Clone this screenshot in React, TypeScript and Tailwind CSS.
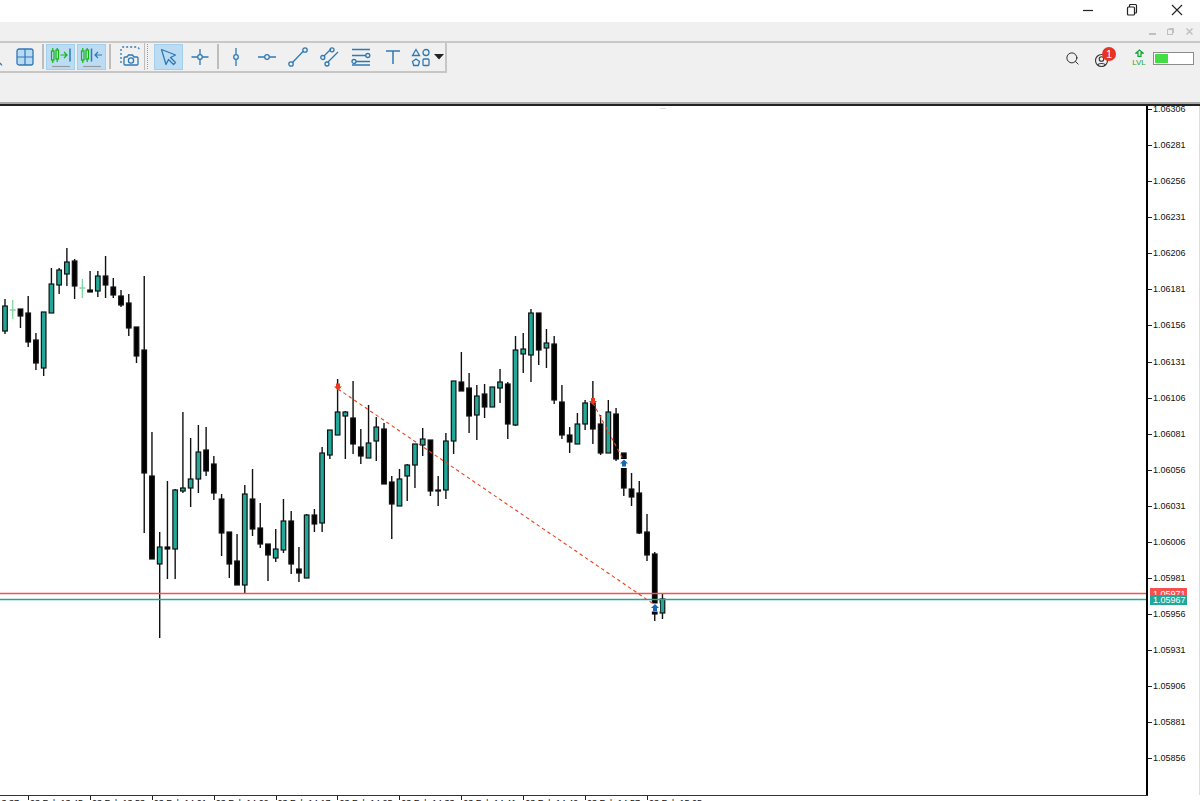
import React from "react";
import { Search } from "lucide-react";

type Candle = [number, number, number, number, "u" | "d" | "g"];

// high, low, body top, body bottom, kind
const candles: Candle[] = [
  [298, 333, 305, 330, "u"], [299, 318, 309, 309, "g"], [308, 327, 308, 315, "d"], [295, 346, 312, 341, "d"],
  [332, 369, 339, 362, "d"], [311, 375, 311, 367, "u"], [267, 312, 283, 312, "u"], [267, 293, 269, 284, "u"],
  [247, 285, 261, 273, "u"], [258, 298, 260, 285, "d"], [278, 297, 287, 287, "g"], [270, 291, 289, 291, "d"],
  [270, 296, 275, 290, "u"], [255, 297, 275, 284, "d"], [277, 297, 286, 294, "d"], [289, 306, 295, 304, "d"],
  [293, 335, 302, 327, "d"], [326, 362, 326, 355, "d"], [275, 532, 349, 472, "d"], [431, 558, 475, 558, "d"],
  [531, 637, 546, 563, "u"], [480, 578, 546, 548, "d"], [488, 578, 489, 548, "u"], [411, 492, 487, 490, "u"],
  [437, 506, 478, 487, "u"], [424, 492, 451, 478, "u"], [426, 475, 449, 470, "d"], [455, 499, 463, 492, "d"],
  [493, 555, 498, 532, "d"], [531, 577, 531, 563, "d"], [533, 584, 560, 584, "d"], [484, 592, 493, 584, "u"],
  [468, 535, 498, 528, "d"], [502, 547, 527, 543, "d"], [543, 580, 543, 554, "d"], [528, 561, 548, 557, "u"],
  [498, 552, 520, 549, "u"], [510, 573, 520, 563, "d"], [546, 581, 568, 572, "d"], [513, 577, 514, 577, "u"],
  [508, 531, 514, 523, "d"], [446, 531, 452, 522, "u"], [429, 458, 429, 454, "u"], [378, 434, 411, 434, "u"],
  [410, 458, 411, 415, "u"], [380, 453, 417, 443, "d"], [428, 463, 446, 455, "d"], [404, 457, 442, 457, "u"],
  [416, 460, 426, 440, "u"], [422, 483, 428, 483, "d"], [475, 538, 481, 503, "d"], [468, 505, 478, 505, "u"],
  [463, 500, 464, 475, "u"], [443, 487, 443, 464, "u"], [427, 455, 438, 444, "u"], [439, 495, 439, 490, "d"],
  [475, 505, 489, 490, "d"], [432, 498, 440, 489, "u"], [380, 453, 380, 440, "u"], [351, 390, 381, 390, "d"],
  [372, 432, 387, 415, "d"], [384, 439, 395, 414, "u"], [383, 417, 393, 406, "d"], [386, 406, 386, 406, "u"],
  [368, 402, 381, 387, "u"], [381, 438, 383, 423, "d"], [335, 425, 349, 424, "u"], [332, 372, 348, 353, "u"],
  [308, 381, 312, 354, "u"], [312, 364, 312, 349, "d"], [328, 367, 342, 347, "u"], [335, 403, 343, 399, "d"],
  [384, 438, 401, 434, "d"], [426, 452, 434, 441, "d"], [412, 443, 423, 443, "u"], [399, 429, 402, 423, "u"],
  [380, 443, 402, 428, "d"], [414, 454, 423, 452, "d"], [399, 452, 411, 452, "u"], [407, 460, 413, 458, "d"],
  [452, 495, 452, 487, "d"], [472, 505, 488, 496, "d"], [480, 533, 492, 532, "d"], [513, 560, 531, 554, "d"],
  [551, 620, 553, 613, "d"], [592, 618, 598, 612, "u"],
];

const prices = [
  "1.06306", "1.06281", "1.06256", "1.06231", "1.06206", "1.06181", "1.06156", "1.06131", "1.06106", "1.06081",
  "1.06056", "1.06031", "1.06006", "1.05981", "1.05956", "1.05931", "1.05906", "1.05881", "1.05856",
];

const times = ["13:45", "13:53", "14:01", "14:09", "14:17", "14:25", "14:33", "14:41", "14:49", "14:57", "15:05"];

const BLUE = "#2f78b4";

function Sep() {
  return <div className="w-[2px] h-[25px] bg-[#bdbdbd] shrink-0" />;
}

function Gap({ w }: { w: string }) {
  return <div className={`${w} shrink-0`} />;
}

function Icon({ children }: { children: React.ReactNode }) {
  return (
    <svg width="20" height="20" viewBox="0 0 20 20" fill="none" stroke={BLUE} strokeWidth="1.3">
      {children}
    </svg>
  );
}

function ActiveButton({ children }: { children: React.ReactNode }) {
  return (
    <div className="w-[29px] h-[26px] shrink-0 flex items-center justify-center bg-[#bcdcf4] border border-[#a3cfef]">
      {children}
    </div>
  );
}

function Cell({ w, children }: { w: string; children: React.ReactNode }) {
  return <div className={`${w} h-[26px] shrink-0 flex items-center justify-center`}>{children}</div>;
}

function CandlesIcon({ dir }: { dir: "in" | "out" }) {
  return (
    <svg width="24" height="22" viewBox="0 0 24 22" fill="none">
      <g stroke="#12b312" strokeWidth="1.2">
        <rect x={dir === "in" ? 2.5 : 1.5} y="5" width="2.5" height="9" />
        <path d={dir === "in" ? "M3.8 2v3M3.8 14v3" : "M2.8 2v3M2.8 14v3"} />
        <rect x={dir === "in" ? 7 : 6} y="4" width="2.5" height="9" />
        <path d={dir === "in" ? "M8.2 2v2M8.2 13v3" : "M7.2 2v2M7.2 13v3"} />
      </g>
      {dir === "in" ? (
        <>
          <path d="M11.5 9h6M15 6l3 3-3 3" stroke="#12b312" strokeWidth="1.2" />
          <path d="M21 2.5v13" stroke={BLUE} strokeWidth="1.5" />
        </>
      ) : (
        <>
          <path d="M11.5 2.5v13" stroke={BLUE} strokeWidth="1.5" />
          <path d="M22 9h-7M18 6l-3 3 3 3" stroke={BLUE} strokeWidth="1.2" />
        </>
      )}
      <path d="M3 20.5h18" stroke="#9a9a9a" strokeWidth="1.2" />
    </svg>
  );
}

function Toolbar() {
  return (
    <div className="w-[447px] h-[30px] flex items-center border-r-2 border-b-2 border-[#c6c6c6] pb-[1px]">
      <Cell w="w-[11px]">
        <svg width="11" height="20" viewBox="0 0 11 20" fill="none" stroke={BLUE} strokeWidth="1.2">
          <path d="M-2 19l2.5-2.5 1.5 2" />
        </svg>
      </Cell>
      <Cell w="w-[28px]">
        <svg width="18" height="18" viewBox="0 0 18 18">
          <rect x="1" y="1" width="16" height="16" rx="2" fill="#b8daf3" stroke={BLUE} strokeWidth="1.3" />
          <path d="M9 1v16M1 9h16" stroke={BLUE} strokeWidth="1.2" />
        </svg>
      </Cell>
      <Gap w="w-[3px]" />
      <Sep />
      <Gap w="w-[2px]" />
      <ActiveButton>
        <CandlesIcon dir="in" />
      </ActiveButton>
      <Gap w="w-[2px]" />
      <ActiveButton>
        <CandlesIcon dir="out" />
      </ActiveButton>
      <Gap w="w-[3px]" />
      <Sep />
      <Cell w="w-[33px] pl-[4px]">
        <svg width="20" height="21" viewBox="0 0 20 21" fill="none" stroke={BLUE} strokeWidth="1.3">
          <path d="M1 17V3a2 2 0 0 1 2-2h14a2 2 0 0 1 2 2v2" strokeDasharray="2 2" />
          <path d="M5 19a1 1 0 0 1-1-1v-6a1 1 0 0 1 1-1h2l1.5-2h4l1.5 2h3a1 1 0 0 1 1 1v6a1 1 0 0 1-1 1z" />
          <circle cx="11" cy="14.5" r="2.6" />
        </svg>
      </Cell>
      <div className="w-[1px] h-[27px] bg-[#bdbdbd] shrink-0" />
      <div className="w-[9px] h-[26px] shrink-0 flex items-start pl-[2px]">
        <div className="w-[2px] h-[25px] border-l border-dotted border-[#9a9a9a]" />
      </div>
      <ActiveButton>
        <svg width="18" height="18" viewBox="0 0 18 18" fill="none" stroke={BLUE} strokeWidth="1.3" strokeLinejoin="round">
          <path d="M1.5 1.5l14 5.5-5 2.5 5 5-2 2-5-5-2.5 5z" />
        </svg>
      </ActiveButton>
      <Cell w="w-[33px]">
        <Icon>
          <path d="M10 2v6M10 12v6M1.5 10h6M12.5 10h6" />
          <circle cx="10" cy="10" r="2.3" />
        </Icon>
      </Cell>
      <Gap w="w-[1px]" />
      <Sep />
      <Cell w="w-[34px]">
        <Icon>
          <path d="M10 1v6.500M10 12.500V19" />
          <circle cx="10" cy="10" r="2.3" />
        </Icon>
      </Cell>
      <Cell w="w-[28px]">
        <Icon>
          <path d="M1 10h6.500M12.500 10H19" />
          <circle cx="10" cy="10" r="2.3" />
        </Icon>
      </Cell>
      <Cell w="w-[34px]">
        <Icon>
          <path d="M4.500 15.500L15 4.500" />
          <circle cx="3" cy="17" r="2.2" />
          <circle cx="17" cy="3" r="2.2" />
        </Icon>
      </Cell>
      <Cell w="w-[29px]">
        <Icon>
          <path d="M4 9l7-7M8 15L18 5" />
          <circle cx="2.800" cy="10.500" r="2" />
          <circle cx="12" cy="2.800" r="2" />
          <circle cx="7" cy="17" r="2" />
        </Icon>
      </Cell>
      <Cell w="w-[33px]">
        <Icon>
          <path d="M1 2.500h18M1 8.500h14M1 18h18M5 14.500h14" />
          <circle cx="16.800" cy="8.500" r="2" />
          <circle cx="3" cy="14.500" r="2" />
        </Icon>
      </Cell>
      <Cell w="w-[32px]">
        <Icon>
          <path d="M3 4h14M10 4v13" strokeWidth="1.5" />
        </Icon>
      </Cell>
      <Cell w="w-[24px]">
        <Icon>
          <path d="M5 2.500l3.500 6h-7z" />
          <circle cx="15" cy="5.500" r="3" />
          <path d="M5 12l3.500 2.500-1.200 4H2.700l-1.200-4z" />
          <rect x="12" y="12" width="6" height="6.500" rx="1" />
        </Icon>
      </Cell>
      <Cell w="w-[12px]">
        <svg width="10" height="6" viewBox="0 0 10 6">
          <path d="M0 0h10L5 5.500z" fill="#222" />
        </svg>
      </Cell>
    </div>
  );
}

function RightTools() {
  return (
    <div className="h-[30px] flex items-center pr-[6px]">
      <Search size={15} strokeWidth={1.5} className="text-[#222] mr-[14px]" />
      <div className="relative w-[18px] h-[18px] mr-[20px] mt-[1px]">
        <svg width="15" height="15" viewBox="0 0 15 15" fill="none" stroke="#333" strokeWidth="1.1" className="mt-[3px]">
          <circle cx="7.5" cy="7.5" r="6" />
          <circle cx="7.5" cy="6" r="2.3" />
          <path d="M3.500 12c1-2 7-2 8 0" />
        </svg>
        <div className="absolute left-[8px] top-[-3px] w-[14px] h-[14px] rounded-full bg-[#e63323] text-white text-[11px] leading-[14px] text-center">
          1
        </div>
      </div>
      <div className="w-[14px] mr-[7px] flex flex-col items-center text-[#12a83c]">
        <svg width="9" height="8" viewBox="0 0 9 8" fill="none" stroke="#12a83c" strokeWidth="1.3">
          <path d="M4.500 1L1 4h2v3.500h3V4h2z" />
        </svg>
        <div className="text-[8px] leading-[9px] mt-[1px]">LVL</div>
      </div>
      <div className="w-[41px] h-[13px] border border-[#8c8c8c] bg-white p-[1px]">
        <div className="w-[13px] h-full bg-[#44dd44]" />
      </div>
    </div>
  );
}

function Chart() {
  return (
    <svg width="1146" height="689" viewBox="0 105 1146 689" className="shrink-0 block">
      <path d="M660 107.500h6" stroke="#dddddd" />
      {candles.map(([hi, lo, top, bottom, kind], i) => {
        const x = 5 + i * 7.735;
        if (kind === "g") {
          return (
            <g key={i} stroke="#7fd6a0" strokeWidth="1.3">
              <path d={`M${x} ${hi}V${lo}M${x - 3} ${top}h6`} />
            </g>
          );
        }
        return (
          <g key={i} stroke="#111111">
            <path d={`M${x} ${hi}V${lo}`} strokeWidth="1.4" />
            <rect
              x={x - 2.3}
              y={top}
              width="4.6"
              height={bottom - top}
              strokeWidth="1.2"
              fill={kind === "u" ? "#22a898" : "#000000"}
            />
          </g>
        );
      })}
      <path d="M0 592.500H1146" stroke="#f55050" strokeWidth="1.4" />
      <path d="M0 598.500H1146" stroke="#22a898" strokeWidth="1.4" />
      <g stroke="#f0401f" strokeWidth="1.1" strokeDasharray="3.500 3" fill="none">
        <path d="M338 388L655 604" />
        <path d="M593 402L624 460" />
      </g>
      <rect x="619" y="458" width="10" height="9" fill="white" />
      <rect x="650" y="602.500" width="10" height="8" fill="white" />
      {/* trade arrows */}
      <path d="M338 389.500l4-4h-2v-3h-4v3h-2z" fill="#e8391c" />
      <path d="M593 404l4-4h-2v-3h-4v3h-2z" fill="#e8391c" />
      <path d="M624 458.500l4 4h-2v3h-4v-3h-2z" fill="#1566b8" />
      <path d="M655 603l4 4h-2v3h-4v-3h-2z" fill="#1566b8" />
    </svg>
  );
}

function PriceAxis() {
  return (
    <div className="relative flex-1 border-r border-[#dcdcdc]">
      <div className="flex flex-col mt-[-4px]">
        {prices.map((p) => (
          <div key={p} className="h-[36.08px] flex items-start shrink-0">
            <div className="w-[4px] h-[1px] bg-[#222] mt-[7px]" />
            <span className="text-[9px] leading-[14px] text-[#111] ml-[1px]">{p}</span>
          </div>
        ))}
      </div>
      <div className="absolute left-[2px] top-[482px] w-[37px] h-[8px] bg-[#f55050] text-white text-[9px] leading-[12px] pl-[3px] overflow-hidden">
        1.05971
      </div>
      <div className="absolute left-[2px] top-[489px] w-[37px] h-[10px] bg-[#22a898] text-white text-[9px] leading-[10px] pl-[3px]">
        1.05967
      </div>
    </div>
  );
}

function TimeAxis() {
  return (
    <div className="w-[1148px] h-[7px] border-t border-[#333] flex overflow-hidden">
      {/* the label before the first tick runs off the left edge */}
      <div className="w-[28px] shrink-0 relative">
        <span className="absolute left-[-34px] top-[2px] text-[9px] leading-[11px] whitespace-nowrap text-[#111]">
          03 Feb 13:37
        </span>
      </div>
      {times.map((t) => (
        <div key={t} className="w-[61.9px] shrink-0 h-[4px] border-l border-[#222] relative">
          <span className="absolute left-[1px] top-[2px] text-[9px] leading-[11px] whitespace-nowrap text-[#111]">
            03 Feb {t}
          </span>
        </div>
      ))}
    </div>
  );
}

export default function App() {
  return (
    <div className="w-[1200px] h-[801px] overflow-hidden bg-white flex flex-col font-['Liberation_Sans',sans-serif]">
      {/* window title */}
      <div className="h-[22px] shrink-0 flex items-start justify-end pr-[17px] pt-[3px] text-[#222]">
        <svg width="12" height="14" viewBox="0 0 12 14" stroke="#222" strokeWidth="1.2" className="mr-[32px]">
          <path d="M1 7.500h10" />
        </svg>
        <svg width="12" height="14" viewBox="0 0 12 14" fill="none" stroke="#222" strokeWidth="1.2" className="mr-[33px]">
          <rect x="1.5" y="4" width="7" height="8" rx="1" />
          <path d="M3.500 4V2.500a1 1 0 0 1 1-1h5a1 1 0 0 1 1 1V9a1 1 0 0 1-1 1H8.500" />
        </svg>
        <svg width="12" height="14" viewBox="0 0 12 14" stroke="#222" strokeWidth="1.1">
          <path d="M1 2l10 10M11 2L1 12" />
        </svg>
      </div>
      {/* menu strip */}
      <div className="h-[19px] shrink-0 bg-[#f0f0f0] flex items-center justify-end pr-[7px]">
        <div className="w-[7px] h-[2px] bg-[#c0c0c0] mr-[11px] mt-[5px]" />
        <svg width="7" height="7" viewBox="0 0 7 7" fill="none" stroke="#c0c0c0" className="mr-[12px]">
          <rect x="0.5" y="1.5" width="5" height="5" />
          <path d="M2 1V0.500h4.500V5" />
        </svg>
        <svg width="7" height="7" viewBox="0 0 7 7" stroke="#c0c0c0" strokeWidth="1.5">
          <path d="M0.500 0.500l6 6M6.500 0.500l-6 6" />
        </svg>
      </div>
      <div className="h-[2px] shrink-0 bg-[#c8c8c8]" />
      {/* toolbar */}
      <div className="h-[59px] shrink-0 bg-[#f0f0f0]">
        <div className="flex justify-between">
          <Toolbar />
          <RightTools />
        </div>
      </div>
      <div className="h-[2px] shrink-0 bg-[#a8a8a8]" />
      <div className="h-[2px] shrink-0 bg-[#222]" />
      {/* chart and axes */}
      <div className="flex-1 min-h-0 flex flex-col">
        <div className="h-[689px] shrink-0 flex">
          <Chart />
          <div className="w-[2px] shrink-0 bg-black" />
          <PriceAxis />
        </div>
        <TimeAxis />
      </div>
    </div>
  );
}
